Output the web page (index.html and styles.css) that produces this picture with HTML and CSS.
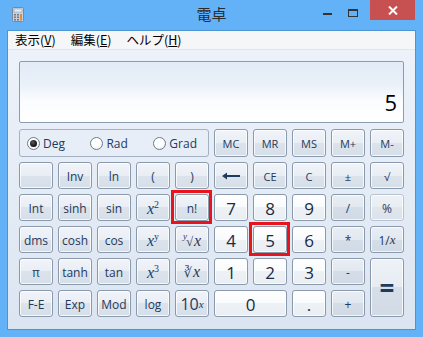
FILE: index.html
```html
<!DOCTYPE html>
<html lang="ja">
  <head>
    <meta charset="UTF-8" />
    <title>電卓</title>
    <link rel="stylesheet" href="styles.css">
  </head>
  <body>
    <div class="window">
      <div class="titleBar">
        <div class="appIcon">
          <svg width="12" height="15" viewBox="0 0 12 15">
            <rect x="0.5" y="0.5" width="11" height="14" rx="1" fill="#c9d1dc" stroke="#7d8796" />
            <rect x="2" y="2" width="8" height="3" fill="#dff0fb" stroke="#7fa7c8" stroke-width="0.6" />
            <g fill="#6d7786">
              <rect x="2" y="7" width="2" height="1.5" />
              <rect x="5" y="7" width="2" height="1.5" />
              <rect x="2" y="9.5" width="2" height="1.5" />
              <rect x="5" y="9.5" width="2" height="1.5" />
              <rect x="2" y="12" width="2" height="1.5" />
              <rect x="5" y="12" width="2" height="1.5" />
            </g>
            <rect x="8" y="7" width="2" height="6.5" fill="#e58a3a" />
          </svg>
        </div>
        <div class="title">電卓</div>
        <div class="controls">
          <div class="ctl minimize"><span></span></div>
          <div class="ctl maximize"><span></span></div>
          <div class="ctl close">
            <svg width="10" height="9" viewBox="0 0 10 9">
              <path d="M1 0.5 L9 8.5 M9 0.5 L1 8.5" stroke="#fff" stroke-width="2" />
            </svg>
          </div>
        </div>
      </div>

      <div class="client">
        <div class="menuBar">
          <span>表示(<u>V</u>)</span>
          <span>編集(<u>E</u>)</span>
          <span>ヘルプ(<u>H</u>)</span>
        </div>

        <div class="calcBody">
          <div class="display"><span class="value">5</span></div>

          <div class="keys">
            <div class="angleBox">
              <label class="radio checked"><span class="dot"></span>Deg</label>
              <label class="radio"><span class="dot"></span>Rad</label>
              <label class="radio"><span class="dot"></span>Grad</label>
            </div>
            <div class="key small">MC</div>
            <div class="key small">MR</div>
            <div class="key small">MS</div>
            <div class="key small">M+</div>
            <div class="key small">M-</div>

            <div class="key"></div>
            <div class="key">Inv</div>
            <div class="key">ln</div>
            <div class="key">(</div>
            <div class="key">)</div>
            <div class="key">
              <svg width="18" height="8" viewBox="0 0 18 8">
                <path d="M18 4 H3" stroke="#1e3a5c" stroke-width="2" />
                <path d="M0 4 L5 0.5 L5 7.5 Z" fill="#1e3a5c" />
              </svg>
            </div>
            <div class="key small">CE</div>
            <div class="key small">C</div>
            <div class="key small">±</div>
            <div class="key small">√</div>

            <div class="key">Int</div>
            <div class="key">sinh</div>
            <div class="key">sin</div>
            <div class="key"><span class="math">x<sup>2</sup></span></div>
            <div class="key marked">n!</div>
            <div class="key digit">7</div>
            <div class="key digit">8</div>
            <div class="key digit">9</div>
            <div class="key op">/</div>
            <div class="key light">%</div>

            <div class="key">dms</div>
            <div class="key">cosh</div>
            <div class="key">cos</div>
            <div class="key"><span class="math">x<sup>y</sup></span></div>
            <div class="key"><span class="math"><sup class="pre">y</sup><span class="root">√</span>x</span></div>
            <div class="key digit">4</div>
            <div class="key digit marked">5</div>
            <div class="key digit">6</div>
            <div class="key op">*</div>
            <div class="key op">1/<i class="mathX">x</i></div>

            <div class="key">π</div>
            <div class="key">tanh</div>
            <div class="key">tan</div>
            <div class="key"><span class="math">x<sup>3</sup></span></div>
            <div class="key"><span class="math"><span class="root">∛</span>x</span></div>
            <div class="key digit">1</div>
            <div class="key digit">2</div>
            <div class="key digit">3</div>
            <div class="key op">-</div>
            <div class="key op equals">=</div>

            <div class="key">F-E</div>
            <div class="key">Exp</div>
            <div class="key">Mod</div>
            <div class="key">log</div>
            <div class="key tenX">10<sup><i>x</i></sup></div>
            <div class="key digit zero">0</div>
            <div class="key digit">.</div>
            <div class="key op">+</div>
          </div>
        </div>
      </div>
    </div>
  </body>
</html>
```

FILE: styles.css
```css
html {
  box-sizing: border-box;
  font-family: "Open Sans", "Noto Sans", sans-serif;
}

*,
*:before,
*:after {
  box-sizing: inherit;
}

body {
  margin: 0;
  padding: 0;
  background-color: #63b2f7;
}

.window {
  width: 423px;
  height: 337px;
  display: flex;
  flex-direction: column;
  padding: 0 7px 7px;
  background-color: #63b2f7;
}

.titleBar {
  height: 30px;
  display: grid;
  grid-template-columns: 1fr auto 1fr;
  align-items: start;
}

.appIcon {
  padding: 7px 0 0 5px;
}

.appIcon svg {
  display: block;
}

.title {
  padding-top: 3px;
  font-family: "Noto Sans CJK JP", sans-serif;
  font-size: 15px;
  color: #2b2b2b;
}

.controls {
  display: flex;
  justify-content: flex-end;
  margin-right: 1px;
}

.ctl {
  height: 20px;
  display: flex;
  align-items: center;
  justify-content: center;
}

.minimize {
  width: 26px;
}

.minimize span {
  width: 9px;
  height: 2px;
  margin-top: 7px;
  background-color: #333;
}

.maximize {
  width: 26px;
  margin-right: 4px;
}

.maximize span {
  width: 10px;
  height: 8px;
  border: 1px solid #333;
  border-top-width: 2px;
  margin-top: 5px;
}

.close {
  width: 45px;
  background-color: #c75050;
}

.close svg {
  display: block;
}

.client {
  flex: 1;
  display: flex;
  flex-direction: column;
  border: 1px solid #4d94d4;
  background: linear-gradient(#eef3fa, #dbe5f1);
}

.menuBar {
  height: 19px;
  display: flex;
  gap: 15px;
  padding-left: 7px;
  background-color: #f5f6f7;
  border-bottom: 1px solid #e2e5ea;
  font-family: "Noto Sans CJK JP", sans-serif;
  font-size: 12.5px;
  line-height: 18px;
  color: #000;
}

.menuBar u {
  text-underline-offset: 1px;
}

.calcBody {
  padding: 11px 11px 0;
}

.display {
  height: 62px;
  display: flex;
  align-items: flex-end;
  justify-content: flex-end;
  padding: 0 6px 7px 0;
  border: 1px solid #8e9cb0;
  border-radius: 2px;
  background: linear-gradient(#e3ebf7 0%, #e9f0f9 35%, #fbfcfe 65%, #ffffff 100%);
}

.value {
  font-size: 22px;
  line-height: 25px;
  color: #000;
}

.keys {
  display: grid;
  grid-template-columns: repeat(10, 34px);
  grid-template-rows: 28px repeat(5, 27px);
  column-gap: 5px;
  row-gap: 5px;
  margin-top: 6px;
}

.angleBox {
  grid-column: span 5;
  display: flex;
  align-items: center;
  justify-content: space-between;
  padding: 0 11px 0 7px;
  border: 1px solid #a3b1c4;
  border-radius: 3px;
  font-size: 12px;
  color: #1e3a5c;
}

.radio {
  display: flex;
  align-items: center;
  gap: 3px;
}

.dot {
  width: 13px;
  height: 13px;
  border-radius: 50%;
  border: 1px solid #6f7b8c;
  background: radial-gradient(circle at 40% 35%, #ffffff 40%, #e4e8ee 100%);
  display: flex;
  align-items: center;
  justify-content: center;
}

.radio.checked .dot:after {
  content: "";
  width: 7px;
  height: 7px;
  border-radius: 50%;
  background: radial-gradient(circle at 40% 35%, #555 0%, #111 70%);
}

.key {
  position: relative;
  display: flex;
  align-items: center;
  justify-content: center;
  padding-top: 1px;
  border: 1px solid #8b99ad;
  border-radius: 3px;
  background: linear-gradient(#f1f4f9 0%, #e9eef5 50%, #dce3ec 50%, #d6dee8 100%);
  box-shadow: inset 0 0 0 1px rgba(255, 255, 255, 0.75);
  font-size: 12px;
  color: #1e3a5c;
}

.key.small {
  font-size: 11px;
}

.key.digit {
  background: linear-gradient(#ffffff 0%, #f8fafc 50%, #eef2f6 50%, #e9eef3 100%);
  font-size: 17px;
  color: #1a2a40;
}

.key.op {
  background: linear-gradient(#e9eef5 0%, #e2e8f0 50%, #d5dde8 50%, #d0d9e4 100%);
}

.key.light {
  border-color: #b8c3d1;
  background: linear-gradient(#eef2f7 0%, #e8edf3 50%, #dfe6ee 50%, #dbe2eb 100%);
}

.key.equals {
  grid-row: span 2;
  font-size: 26px;
  font-weight: bold;
  color: #1e3a5c;
  background: linear-gradient(#eef2f7 0%, #e6ecf3 50%, #d6dee9 50%, #d1dae5 100%);
}

.key.zero {
  grid-column: span 2;
}

.key.marked:after {
  content: "";
  position: absolute;
  top: -5px;
  left: -5px;
  right: -4px;
  bottom: -4px;
  border: 3px solid #e8141b;
}

.math {
  font-family: "Liberation Serif", "DejaVu Serif", serif;
  font-style: italic;
  font-size: 16px;
  color: #1e3a5c;
}

.math sup {
  font-style: normal;
  font-size: 10px;
  vertical-align: 6px;
}

.math sup.pre {
  font-style: italic;
  font-size: 9px;
  margin-right: -1px;
  vertical-align: 7px;
}

.math .root {
  font-style: normal;
  font-size: 13px;
  margin-right: 1px;
}

.mathX {
  font-family: "Liberation Serif", serif;
  font-size: 13px;
}

.tenX {
  font-size: 16px;
}

.tenX sup {
  font-family: "Liberation Serif", serif;
  font-size: 11px;
  vertical-align: 7px;
}
```
